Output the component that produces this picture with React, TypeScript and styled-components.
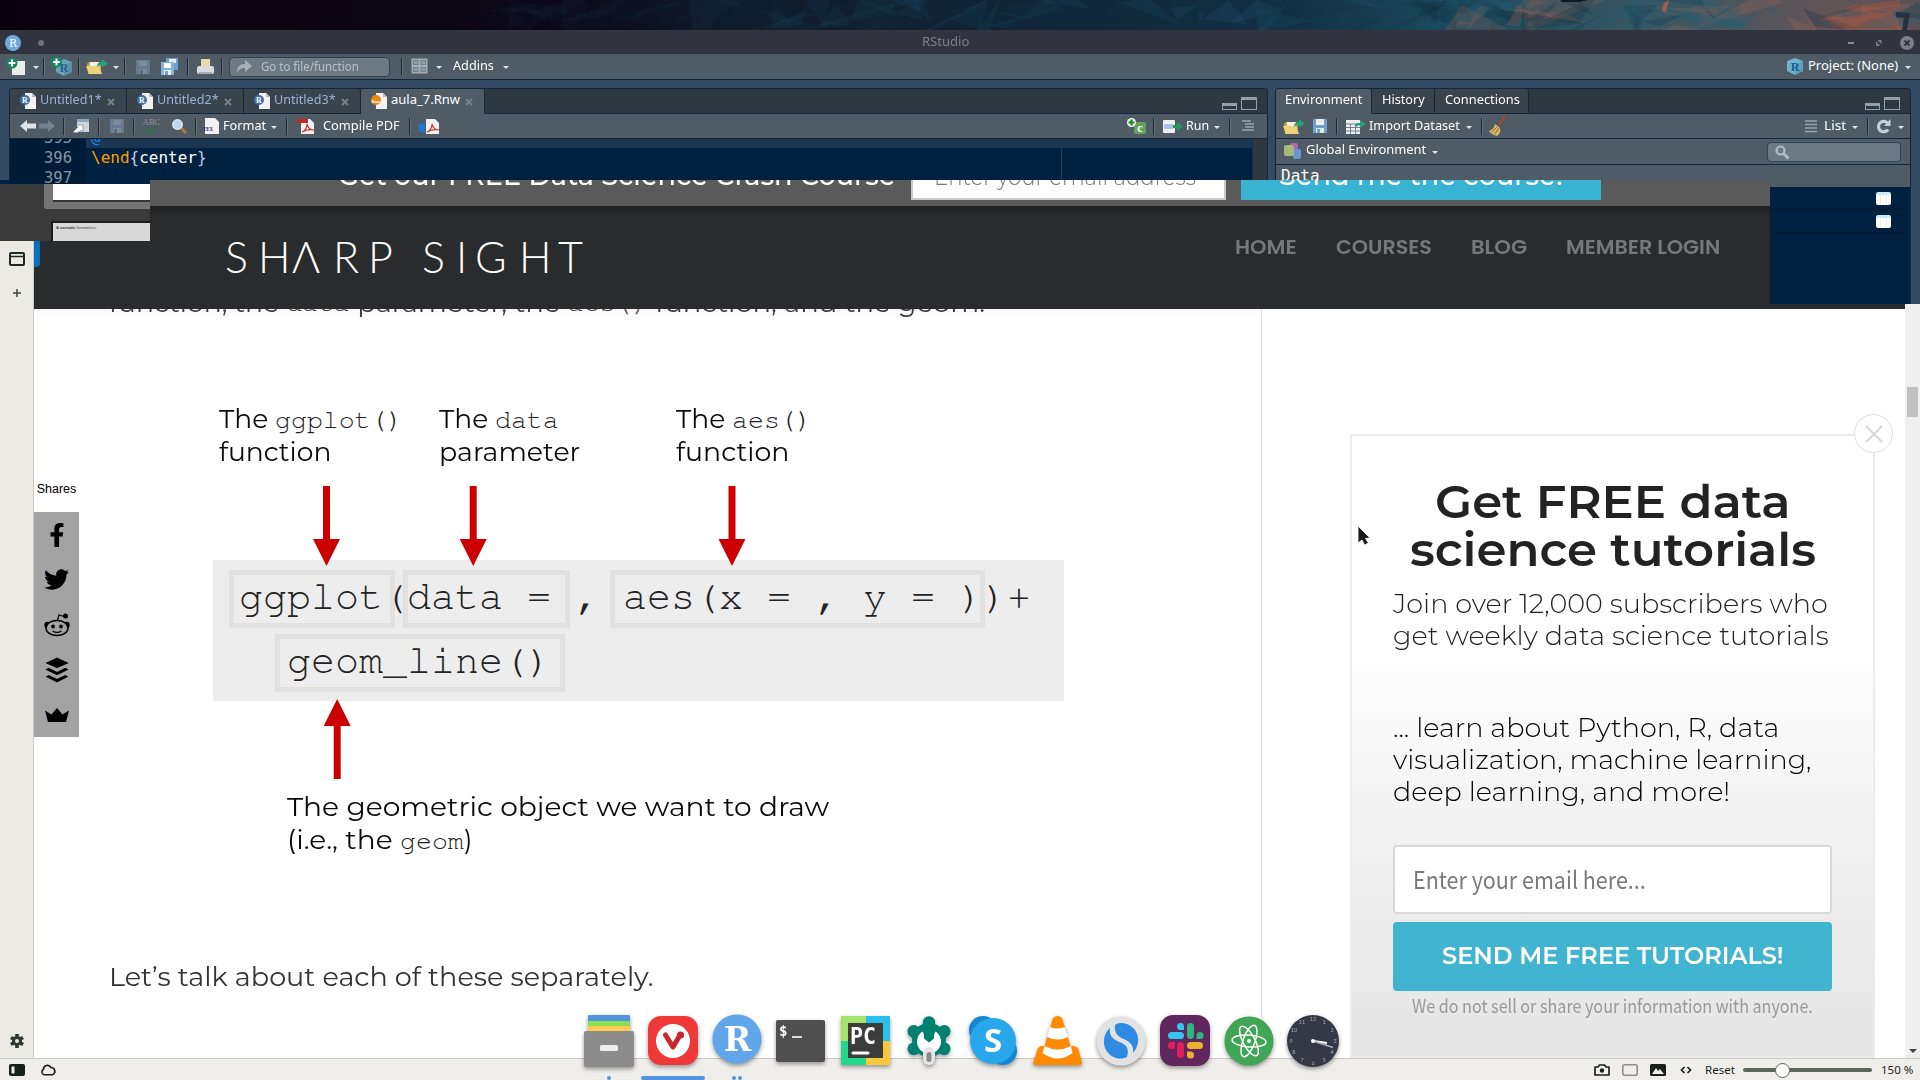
import React, { useLayoutEffect, useRef, useState } from "react";
import styled, { createGlobalStyle, css } from "styled-components";
import { FaFacebookF, FaTwitter, FaBuffer } from "react-icons/fa";

const sans = `"Montserrat", "Inter", "Open Sans", sans-serif`;
const ui = `"Noto Sans", "Open Sans", sans-serif`;
const mono = `"Nimbus Mono PS", "FreeMono", "Courier Prime", "Courier New", "Liberation Mono", monospace`;
const source = `"Source Sans Pro", "Noto Sans CJK SC", "Open Sans", sans-serif`;

const slate = "#4f5c66";
const navy = "#00213f";
const ink = "#13273b";
const frame = "#324b63";

const Global = createGlobalStyle`
  * { box-sizing: border-box; }
  body { margin: 0; background: #fff; }
  svg { display: block; overflow: visible; }
`;

/* ---------- text that is set to an exact measure ---------- */

const FitBox = styled.span`
  display: inline-block;
  flex: none;
  white-space: pre;
`;
const FitInner = styled.span`
  display: inline-block;
  transform-origin: 0 50%;
`;

function Fit({ w, children }: { w: number; children: React.ReactNode }) {
  const ref = useRef<HTMLSpanElement>(null);
  const [scale, setScale] = useState(1);
  useLayoutEffect(() => {
    if (ref.current) setScale(w / ref.current.offsetWidth);
  }, [w]);
  return (
    <FitBox style={{ width: w }}>
      <FitInner ref={ref} style={{ transform: `scaleX(${scale})` }}>
        {children}
      </FitInner>
    </FitBox>
  );
}

/* ---------- desktop ---------- */

const Screen = styled.div`
  position: relative;
  width: 1920px;
  height: 1080px;
  overflow: hidden;
  display: flex;
  flex-direction: column;
  background: #fff;
`;
const WallpaperStrip = styled.div`
  height: 30px;
  flex: none;
  overflow: hidden;
`;

function Wallpaper() {
  const shards: React.ReactNode[] = [];
  let seed = 41;
  const rnd = () => {
    seed = (seed * 16807) % 2147483647;
    return seed / 2147483647;
  };
  for (let i = 0; i < 190; i++) {
    const x = 480 + rnd() * 1440;
    const t = (x - 480) / 1440;
    const s = 20 + rnd() * 50;
    const warm = rnd() < (t - 0.6) * 1.7;
    const color = warm ? "#a86350" : rnd() > 0.5 ? "#1f6078" : "#12303f";
    const p = [0, 1, 2].map(() => `${x + (rnd() - 0.5) * s * 2},${15 + (rnd() - 0.5) * s}`).join(" ");
    shards.push(<polygon key={i} points={p} fill={color} opacity={0.05 + t * 0.25} />);
  }
  return (
    <svg width="1920" height="30">
      <defs>
        <linearGradient id="sky">
          <stop offset="0" stopColor="#0b0010" />
          <stop offset=".3" stopColor="#0c0716" />
          <stop offset=".37" stopColor="#0f1a29" />
          <stop offset=".55" stopColor="#10263a" />
          <stop offset=".67" stopColor="#133044" />
          <stop offset=".76" stopColor="#1c4a5e" />
          <stop offset=".86" stopColor="#3b5661" />
          <stop offset=".95" stopColor="#625558" />
          <stop offset="1" stopColor="#5c5055" />
        </linearGradient>
      </defs>
      <rect width="1920" height="30" fill="url(#sky)" />
      {shards}
      <path d="M1840 8l60-8v6l-40 6zM1824 18l68-6 8 18h-52z" fill="#b0543f" opacity=".4" />
      <path d="M1896 12l14 1-3 17h-5l2-12-8-1z" fill="#26323f" />
      <path d="M1560 0h28l-8 2h-18z" fill="#0c1a29" />
      <path d="M1664 3l5-3-3 12-4-1z" fill="#a0604f" />
    </svg>
  );
}

/* ---------- IDE window ---------- */

const TitleBar = styled.div`
  height: 24px;
  flex: none;
  background: #31343f;
  display: flex;
  align-items: center;
  padding: 2px 5px 0;
  color: #7c808b;
  font: 12.5px/20px ${ui};
`;
const TitleText = styled.div`
  margin-left: 878px;
  padding-bottom: 3px;
  flex: 1;
`;
const WindowDot = styled.div`
  width: 6px;
  height: 6px;
  margin-left: 17px;
  border-radius: 50%;
  background: #6d717b;
`;

const Bar = styled.div<{ $h?: number; $pad?: number }>`
  height: ${(p) => p.$h ?? 25}px;
  flex: none;
  display: flex;
  align-items: center;
  padding-left: ${(p) => p.$pad ?? 0}px;
  background: ${slate};
  color: #fff;
  font: 13px/20px ${ui};
  border-bottom: 1px solid ${ink};
`;
const Slot = styled.span<{ $gap?: number; $drop?: number }>`
  display: block;
  flex: none;
  margin-left: ${(p) => p.$gap ?? 0}px;
  padding-top: ${(p) => p.$drop ?? 0}px;
`;
const Label = styled.span<{ $gap?: number; $lift?: number }>`
  flex: none;
  margin-left: ${(p) => p.$gap ?? 0}px;
  padding-bottom: ${(p) => p.$lift ?? 2}px;
`;
const Divider = styled.span<{ $gap?: number }>`
  width: 2px;
  height: 17px;
  flex: none;
  margin-left: ${(p) => p.$gap ?? 0}px;
  background: linear-gradient(90deg, #1c2a36 50%, #65727c 50%);
`;
const Caret = styled.span<{ $gap?: number }>`
  flex: none;
  margin: 2px 0 0 ${(p) => p.$gap ?? 0}px;
  border: 3px solid transparent;
  border-top-color: #e1e5e8;
  border-bottom: 0;
`;
const Spacer = styled.span`
  flex: 1;
`;
const SearchField = styled.div<{ $w: number; $gap?: number }>`
  width: ${(p) => p.$w}px;
  height: 20px;
  flex: none;
  margin-left: ${(p) => p.$gap ?? 0}px;
  border: 1px solid #2f4153;
  border-radius: 4px;
  background: #6d7982;
  color: #b9c0c6;
  display: flex;
  align-items: center;
  padding-left: 7px;
`;

const Workspace = styled.div`
  position: relative;
  z-index: 3;
  height: 100px;
  flex: none;
  display: flex;
  gap: 7px;
  padding: 8px 9px 0;
  background: ${frame};
`;
const Pane = styled.div<{ $w: number }>`
  width: ${(p) => p.$w}px;
  flex: none;
  display: flex;
  flex-direction: column;
  border: 1px solid ${ink};
  border-bottom: 0;
  border-radius: 4px 4px 0 0;
  height: 92px;
`;
const TabStrip = styled.div`
  height: 25px;
  flex: none;
  display: flex;
  background: #2e3841;
  border-radius: 3px 3px 0 0;
  font: 13px/20px ${ui};
`;
const Tab = styled.div<{ $w: number; $active?: boolean; $plain?: boolean }>`
  width: ${(p) => p.$w}px;
  height: 25px;
  display: flex;
  align-items: center;
  padding-left: 10px;
  color: ${(p) => (p.$active || p.$plain ? "#fff" : "#9db1dc")};
  background: ${(p) => (p.$active ? slate : "#38434b")};
  border-right: 1px solid ${ink};
  border-bottom: 1px solid ${(p) => (p.$active ? slate : ink)};
  border-radius: 3px 3px 0 0;
`;
const TabRest = styled.div`
  flex: 1;
  display: flex;
  justify-content: flex-end;
  align-items: flex-end;
  gap: 4px;
  padding: 0 10px 3px 0;
  border-bottom: 1px solid ${ink};
`;
const MinIcon = styled.div`
  width: 15px;
  height: 7px;
  border: 1px solid #97a0a6;
  border-top-width: 3px;
`;
const MaxIcon = styled.div`
  width: 16px;
  height: 13px;
  border: 1px solid #97a0a6;
  border-top-width: 3px;
`;
const Editor = styled.div`
  height: 41px;
  flex: none;
  display: flex;
  background: ${navy};
  font: 16px/20px "DejaVu Sans Mono", monospace;
`;
const Gutter = styled.div`
  width: 76px;
  height: 45px;
  flex: none;
  overflow: hidden;
  padding-right: 14px;
  background: #001b36;
  color: #8795a3;
  font-size: 15.5px;
  text-align: right;
  div { height: 20px; }
  div:first-child { margin-top: -11px; }
`;
const Code = styled.div`
  flex: 1;
  overflow: hidden;
  color: #fff;
  background: linear-gradient(90deg, transparent 975px, #1f3f60 975px, #1f3f60 976px, transparent 976px);
`;
const CodeLine = styled.div<{ $current?: boolean }>`
  height: 20px;
  padding-left: 5px;
  white-space: pre;
  ${(p) => p.$current && css`
    margin-top: -11px;
    background: #1a3650;
    color: #0a84ff;
  `}
`;
const Macro = styled.span`color: #ff9d00;`;
const Brace = styled.span`color: #b9ccf5;`;
const EditorScroll = styled.div`
  width: 15px;
  background: #2e3841;
  border-left: 1px solid #13304c;
`;
const DataHead = styled.div`
  height: 15px;
  overflow: hidden;
  padding-left: 5px;
  background: ${slate};
  color: #fff;
  font: 16px/21px "DejaVu Sans Mono", monospace;
`;

/* the lower part of the environment pane, seen beside the browser */
const EnvRemainder = styled.div`
  position: absolute;
  z-index: 3;
  left: 1770px;
  top: 180px;
  width: 150px;
  height: 124px;
  background: ${frame};
  display: flex;
`;
const EnvTable = styled.div`
  width: 141px;
  height: 124px;
  background: ${navy};
  border-right: 1px solid ${ink};
`;
const EnvHead = styled.div`
  height: 7px;
  background: ${slate};
`;
const EnvRow = styled.div`
  height: 23px;
  border-bottom: 1px solid #06192e;
  display: flex;
  align-items: center;
  justify-content: flex-end;
  padding-right: 19px;
`;
const GridGlyph = styled.div`
  width: 15px;
  height: 13px;
  border-radius: 2px;
  border-top: 3px solid #c9ecfb;
  background:
    linear-gradient(90deg, transparent 4px, #eef0f3 4px, #eef0f3 5px, transparent 5px, transparent 10px, #eef0f3 10px, #eef0f3 11px, transparent 11px),
    #fff;
`;

/* thumbnails of a document viewer showing through at the left */
const Thumbs = styled.div`
  position: absolute;
  z-index: 2;
  left: 0;
  top: 180px;
  width: 150px;
  height: 61px;
  border-top: 4px solid ${navy};
  background: #3a3a3a;
  overflow: hidden;
  padding-left: 44px;
`;
const ThumbFrame = styled.div`
  height: 25px;
  padding-left: 9px;
  background: #747474;
  border-radius: 0 0 0 3px;
`;
const ThumbPage = styled.div`
  height: 18px;
  background: #fff;
  border-bottom: 2px solid #353535;
`;
const ThumbNext = styled.div`
  height: 21px;
  margin: 12px 0 0 7px;
  padding-left: 3px;
  border: 2px solid #1c1c1c;
  border-right: 0;
  border-bottom: 0;
  background: #d8d8d8;
  color: #444;
  font: 4px/9px "Liberation Sans", sans-serif;
`;

/* ---------- browser ---------- */

const Browser = styled.div`
  height: 878px;
  flex: none;
  display: flex;
`;
const Rail = styled.div`
  width: 34px;
  flex: none;
  margin-top: 61px;
  padding: 11px 0 10px;
  display: flex;
  flex-direction: column;
  align-items: center;
  background: #ebeae5;
  border-right: 1px solid #cccbc4;
  svg:nth-child(2) { margin-top: 23px; }
  svg:last-child { margin-top: auto; }
`;
const Page = styled.div`
  flex: 1;
  min-width: 0;
  display: flex;
  flex-direction: column;
`;
const Banner = styled.div`
  height: 26px;
  flex: none;
  display: flex;
  align-items: flex-start;
  overflow: hidden;
  padding-left: 304px;
  background: #5a5a5a;
  color: #fff;
  font: 500 27px/40px ${sans};
`;
const BannerText = styled.div`
  margin-top: -24px;
`;
const BannerField = styled.div`
  width: 315px;
  height: 60px;
  margin: -40px 0 0 16px;
  padding: 14px 0 0 21px;
  border: 2px solid #c9c9c9;
  background: #fff;
  color: #777;
  font-weight: 300;
  font-size: 25px;
`;
const BannerButton = styled.div`
  width: 360px;
  height: 60px;
  margin: -40px 0 0 15px;
  padding: 16px 0 0 38px;
  background: #3ab3d3;
`;
const SiteHeader = styled.div`
  position: relative;
  height: 103px;
  flex: none;
  display: flex;
  padding-left: 191px;
  background: linear-gradient(#202123, #2a2b2d 10px);
`;
const ActiveMark = styled.div`
  position: absolute;
  left: 0;
  top: 35px;
  width: 6px;
  height: 26px;
  background: #0071bc;
  border-radius: 0 0 4px 0;
`;
const Logo = styled.div`
  width: 363px;
  margin-top: 24px;
  display: flex;
  color: #fff;
  font: 300 43px/54px "Lato", sans-serif;
`;
const LogoLetter = styled.span<{ $w: number }>`
  width: ${(p) => p.$w}px;
`;
const Nav = styled.nav`
  display: flex;
  gap: 39px;
  margin: 25px 0 0 647px;
  color: #77787a;
  font: 600 20px/32px "Poppins", "Roboto", sans-serif;
`;

const Body = styled.div`
  flex: 1;
  min-height: 0;
  display: flex;
`;
const Article = styled.div`
  position: relative;
  width: 1228px;
  flex: none;
  border-right: 1px solid #dcdcdc;
  background: linear-gradient(#fbf8f9, #fff 12px);
`;
const Mono = styled.span`
  font-family: ${mono};
`;
const Clipped = styled.div`
  height: 10px;
  display: flex;
  overflow: hidden;
  padding-left: 75px;
  color: #3a3a3a;
  font: 400 26px/36px ${sans};
  > * { margin-top: -24px; }
  ${Mono} { font-size: 26.6px; }
`;
const ShareColumn = styled.div`
  width: 45px;
  margin-top: 162px;
  display: flex;
  flex-direction: column;
`;
const ShareLabel = styled.div`
  height: 16px;
  margin-bottom: 15px;
  text-align: center;
  font: 12.5px/16px "Liberation Sans", sans-serif;
`;
const ShareItem = styled.div`
  height: 45px;
  display: flex;
  align-items: center;
  justify-content: center;
  background: #a3a3a3;
  color: #000;
`;
const Closing = styled.div`
  margin: 224px 0 0 75px;
  color: #333;
  font: 400 26px/32px ${sans};
`;

/* annotated code figure */
const Figure = styled.div`
  position: absolute;
  left: 179px;
  top: 87px;
  width: 852px;
  height: 470px;
  color: #0a0a0a;
  font: 400 27px/33px ${sans};
`;
const CodePanel = styled.div`
  position: absolute;
  top: 164px;
  width: 851px;
  height: 141px;
  background: #ededed;
`;
const Frame = styled.div<{ $x: number; $y: number; $w: number }>`
  position: absolute;
  left: ${(p) => p.$x}px;
  top: ${(p) => p.$y}px;
  width: ${(p) => p.$w}px;
  height: 58px;
  border: 5px solid #e1e1e1;
`;
const Snippet = styled.div<{ $x: number; $y: number }>`
  position: absolute;
  left: ${(p) => p.$x}px;
  top: ${(p) => p.$y}px;
  white-space: pre;
  color: #222;
  font: 40px/52px ${mono};
`;
const Note = styled.div<{ $x: number; $y: number }>`
  position: absolute;
  left: ${(p) => p.$x}px;
  top: ${(p) => p.$y}px;
  ${Mono} { font-size: 26.6px; color: #222; }
`;
const NoteLine = styled.div`
  display: flex;
  align-items: baseline;
  height: 33px;
`;
const Arrows = styled.svg`
  position: absolute;
  left: 0;
  top: 0;
`;

/* sign-up card */
const Aside = styled.div`
  flex: 1;
  padding: 125px 0 0 88px;
`;
const Card = styled.div`
  position: relative;
  width: 525px;
  height: 624px;
  padding-top: 42px;
  display: flex;
  flex-direction: column;
  align-items: center;
  border: 2px solid #ececec;
  background: linear-gradient(#fff 200px, #fcfcfc 250px, #efefef 440px, #e5e5e5);
`;
const CloseButton = styled.div`
  position: absolute;
  right: -20px;
  top: -22px;
  width: 39px;
  height: 39px;
  border: 1.5px solid #dcdcdc;
  border-radius: 50%;
  background: #fff;
  display: grid;
  place-items: center;
`;
const CardTitle = styled.div`
  height: 96px;
  display: flex;
  flex-direction: column;
  align-items: center;
  color: #222;
  font: 600 46.5px/48px ${sans};
`;
const CardText = styled.div<{ $top: number; $color: string }>`
  width: 439px;
  margin-top: ${(p) => p.$top}px;
  display: flex;
  flex-direction: column;
  color: ${(p) => p.$color};
  font: 300 26.5px/32px ${sans};
`;
const EmailField = styled.div`
  width: 439px;
  height: 69px;
  margin-top: 37px;
  padding: 0 0 2px 18px;
  display: flex;
  align-items: center;
  border: 2px solid #d9d9d9;
  border-radius: 4px;
  background: #fff;
  color: #7a7a7a;
  font: 400 24px/30px ${source};
`;
const SubmitButton = styled.div`
  width: 439px;
  height: 69px;
  margin-top: 8px;
  padding-bottom: 2px;
  display: flex;
  align-items: center;
  justify-content: center;
  border-radius: 4px;
  background: #41b5cf;
  color: #fff;
  font: 600 23.5px/30px ${sans};
`;
const FinePrint = styled.div`
  color: #999;
  font: 400 18.5px/28px ${source};
`;
const Scrollbar = styled.div`
  position: relative;
  z-index: 2;
  width: 15px;
  margin-top: -5px;
  display: flex;
  flex-direction: column;
  align-items: center;
  justify-content: space-between;
  padding: 83px 0 5px;
  background: #efefef;
`;
const Thumb = styled.div`
  width: 11px;
  height: 30px;
  background: #c0c0c0;
`;
const DownArrow = styled.div`
  border: 4px solid transparent;
  border-top-color: #444;
  border-bottom: 0;
`;

const StatusBar = styled.div`
  height: 22px;
  flex: none;
  display: flex;
  align-items: center;
  padding: 1px 7px 0 9px;
  background: #efeeea;
  border-top: 1px solid #cccbc4;
  color: #1a241d;
  font: 11.5px/18px ${ui};
`;
const Slider = styled.div`
  width: 129px;
  height: 4px;
  margin: 0 9px 0 8px;
  border-radius: 2px;
  background: #5c6759;
  display: flex;
  align-items: center;
  padding-left: 32px;
`;
const Knob = styled.div`
  width: 15px;
  height: 15px;
  border: 1px solid #5c6759;
  border-radius: 50%;
  background: #fff;
`;

const Dock = styled.div`
  position: absolute;
  z-index: 4;
  left: 577px;
  top: 1013px;
  display: flex;
`;
const DockItem = styled.div`
  width: 64px;
  height: 67px;
  display: flex;
  flex-direction: column;
  align-items: center;
  justify-content: space-between;
  svg { filter: drop-shadow(0 2px 2px rgba(0, 0, 0, 0.4)); }
`;
const Running = styled.div`
  height: 4px;
  display: flex;
  gap: 2px;
`;
const RunDot = styled.span<{ $wide?: boolean }>`
  width: ${(p) => (p.$wide ? 64 : 4)}px;
  height: 4px;
  border-radius: 2px;
  background: #5294e2;
`;
const Pointer = styled.svg`
  position: absolute;
  z-index: 4;
  left: 1356px;
  top: 525px;
`;

/* ---------- small icons ---------- */

const Plus = ({ x = 5, y = 5 }: { x?: number; y?: number }) => (
  <g>
    <circle cx={x} cy={y} r="5.5" fill="#138a5e" />
    <path d={`M${x - 3.4} ${y}h6.8M${x} ${y - 3.4}v6.8`} stroke="#fff" strokeWidth="2" />
  </g>
);
const NewFile = () => (
  <svg width="20" height="18">
    <path d="M6 3h13v14H6z" fill="#eceeee" />
    <Plus x={6} y={5} />
  </svg>
);
const CubeShape = () => (
  <g>
    <path d="M9 0l8 3v10l-8 4-8-4V3z" fill="#6fb4cc" />
    <path d="M9 7v10l8-4V3z" fill="#4a8ea9" opacity=".55" />
    <text x="9" y="13" textAnchor="middle" fontFamily="Liberation Serif, serif" fontSize="12" fontWeight="700" fill="#1d5c94">R</text>
  </g>
);
const NewProject = () => (
  <svg width="21" height="20"><g transform="translate(4 2)" opacity=".8"><CubeShape /></g><Plus x={5.5} y={5} /></svg>
);
const Cube = () => <svg width="18" height="17"><CubeShape /></svg>;
const Folder = () => (
  <svg width="22" height="17">
    <path d="M1 6l2-2h5l1 2h6v10H2z" fill="#c9a54a" />
    <path d="M4 4h9v5H4z" fill="#f4f0dc" />
    <path d="M0 8h13l3 8H3z" fill="#ecd27c" />
    <path d="M11 9c0-4 2-5 5-5V1l6 4.500-6 4V7c-2 0-3 0-5 2z" fill="#28a07a" />
  </svg>
);
const Floppy = ({ c = "#6f9fcb" }: { c?: string }) => (
  <svg width="14" height="14">
    <path d="M0 0h14v14H0z" fill={c} />
    <path d="M3 0h8v6H3z" fill="#e9eef2" />
    <path d="M3 9h8v5H3z" fill="#dfe7ec" />
    <path d="M4 10h3v4H4z" fill={c} />
  </svg>
);
const DimFloppy = () => (
  <svg width="14" height="14">
    <path d="M0 0h14v14H0z" fill="#657b90" />
    <path d="M3 1h8v5H3z" fill="#7d8c98" />
    <path d="M3 9h8v5H3z" fill="#7d8c98" />
    <path d="M4 10h3v4H4z" fill="#566b80" />
  </svg>
);
const FloppyStack = () => (
  <svg width="17" height="18">
    <path d="M5 0h12v12H5z" fill="#6f9fcb" /><path d="M8 1h7v4H8z" fill="#e9eef2" />
    <path d="M0 4h13v13H0z" fill="#85b3da" /><path d="M3 5h7v5H3z" fill="#fff" /><path d="M3 12h7v5H3z" fill="#eaf0f4" /><path d="M4 13h3v4H4z" fill="#6f9fcb" />
  </svg>
);
const Printer = () => (
  <svg width="17" height="18">
    <path d="M4 1h9v9H4z" fill="#ead9ac" />
    <rect y="8" width="17" height="8" rx="2" fill="#d9dcdf" />
    <path d="M2 14h13v2H2z" fill="#a7adb2" />
  </svg>
);
const JumpArrow = () => (
  <svg width="15" height="14"><path d="M0 13c0-7 3-9 8-9V0l7 6-7 6V8C4 8 2 9 0 13z" fill="#a7afb5" /></svg>
);
const PanesGrid = () => (
  <svg width="17" height="17">
    <rect x=".5" y=".5" width="16" height="15" fill="#a4adb3" />
    <path d="M2 2h5.500v5H2zM9.500 2H15v5H9.500zM2 9h5.500v5H2zM9.500 9H15v5H9.500z" fill="#747f88" />
    <path d="M3 3h3.500v3H3zM10.500 3H14v3h-3.500zM3 10h3.500v3H3zM10.500 10H14v3h-3.500z" fill="#959ea5" />
  </svg>
);
const DocIcon = ({ c = "#3d6fa5", t = "R" }: { c?: string; t?: string }) => (
  <svg width="16" height="16">
    <path d="M5 0h7l4 4v12H5z" fill="#f2f2f2" /><path d="M12 0v4h4z" fill="#b9c0c4" />
    <circle cx="5" cy="7" r="5" fill={c} />
    <text x="5" y="9.500" textAnchor="middle" fontFamily="Liberation Serif, serif" fontWeight="700" fontSize={t.length > 1 ? 4.5 : 8} fill="#fff">{t}</text>
  </svg>
);
const TabClose = () => (
  <svg width="8" height="8"><path d="M1 1l6 6M7 1L1 7" stroke="#75808a" strokeWidth="2" /></svg>
);
const ArrowLR = ({ flip }: { flip?: boolean }) => (
  <svg width="16" height="12"><path transform={flip ? "translate(16 0) scale(-1 1)" : undefined} d="M0 6l7-6v3.500h9v5H7V12z" fill={flip ? "#75818a" : "#dfe2e4"} /></svg>
);
const PopOut = () => (
  <svg width="16" height="14">
    <path d="M4 0h12v13H4z" fill="#cfd6da" /><path d="M4 0h12v3H4z" fill="#8da5b5" />
    <path d="M0 13l5-5-2-2h7v7l-2-2-4 3z" fill="#fff" stroke="#66737d" strokeWidth=".6" />
  </svg>
);
const Spell = () => (
  <svg width="19" height="17">
    <text x="9.500" y="6.500" textAnchor="middle" fontFamily="Liberation Serif, serif" fontSize="8.500" fill="#8e979d">ABC</text>
    <path d="M5 12l3 3 6-7" fill="none" stroke="#1f7a38" strokeWidth="1.800" />
  </svg>
);
const Lens = () => (
  <svg width="15" height="15">
    <path d="M8 8l6 6" stroke="#b07a35" strokeWidth="3" /><circle cx="5.500" cy="5.500" r="4.700" fill="#bcd8ee" stroke="#dfe8ef" strokeWidth="1.500" />
  </svg>
);
const TexDoc = () => (
  <svg width="17" height="17">
    <path d="M2 0h10l4 4v12H2z" fill="#f2f2f2" />
    <text x="0" y="13" fontFamily="Liberation Serif, serif" fontSize="7" textLength="10" lengthAdjust="spacingAndGlyphs" fontWeight="700" fill="#2a2a80">TEX</text>
  </svg>
);
const PdfDoc = ({ publish }: { publish?: boolean }) => (
  <svg width={publish ? 22 : 18} height="17">
    <g transform={publish ? "translate(4 0)" : undefined}>
      <path d="M4 1h9l4 4v11H4z" fill="#f2f2f2" />
      {!publish && <path d="M0 1h11v4H0z" fill="#c22b25" />}
      <path d="M5 14c4-2 5-5 5-8 1 4 3 6 7 6-4-1-8 0-12 2z" fill="none" stroke="#cc3a33" strokeWidth="1.100" />
    </g>
    {publish && <path d="M9 15C1 15 0 12 1 8L0 7l6-2 2 6-2-1c0 2 1 3 3 5z" fill="#1a78d0" />}
  </svg>
);
const InsertChunk = () => (
  <svg width="19" height="17">
    <rect x="7" y="4" width="12" height="12" rx="2" fill="#64a35f" />
    <text x="13" y="13.500" textAnchor="middle" fontFamily="Liberation Serif, serif" fontSize="12" fontWeight="700" fill="#fff">c</text>
    <circle cx="4.500" cy="4.500" r="4.500" fill="#f2f2f2" /><path d="M1.500 4.500h6M4.500 1.500v6" stroke="#1b8a1b" strokeWidth="2.200" />
  </svg>
);
const RunIcon = () => (
  <svg width="20" height="13">
    <rect width="12" height="13" rx="1" fill="#eef0f2" /><path d="M1 4h9v5H1z" fill="#a9c4e6" />
    <path d="M10 5h4V2l6 4.500-6 4.500V8h-4z" fill="#1c9c5a" />
  </svg>
);
const Lines = ({ step }: { step?: boolean }) => (
  <svg width="13" height="12">
    <path d={step ? "M0 1h9M3 4h9M3 7h9M0 10h12" : "M0 1h12M0 4.500h12M0 8h12M0 11.500h12"} stroke="#9aa3a9" strokeWidth="1.300" />
  </svg>
);
const ImportIcon = () => (
  <svg width="20" height="15">
    <path d="M0 1h14v14H0z" fill="#eceff1" /><path d="M0 5h14M0 8.500h14M0 12h14M4.500 5v10M9.500 5v10" stroke="#70808c" />
    <path d="M9 8c0-4 2-4 5-4V1l6 4-6 4V6.500c-2 0-3 0-5 1.500z" fill="#28a07a" />
  </svg>
);
const Broom = () => (
  <svg width="18" height="20">
    <path d="M16 0l-6 9" stroke="#b5452f" strokeWidth="2" />
    <path d="M6 8l5 4c1 3 0 6-3 8-3-1-6-2-8-5 3-1 5-3 6-7z" fill="#d9b36a" /><path d="M3 16l5-5M6 18l4-6" stroke="#8d6a30" />
  </svg>
);
const Refresh = () => (
  <svg width="15" height="15"><path d="M12 10.500A5.200 5.200 0 1 1 11.500 4" fill="none" stroke="#c9d0d5" strokeWidth="3.200" /><path d="M14.500 0v7H8z" fill="#c9d0d5" /></svg>
);
const EnvIcon = () => (
  <svg width="17" height="17">
    <rect x="6" width="8" height="11" rx="2" fill="#a868b4" /><rect x="9" y="6" width="8" height="10" rx="2" fill="#6a95d0" /><rect y="2" width="10" height="11" rx="2" fill="#a7b77a" />
  </svg>
);
const SmallLens = () => (
  <svg width="15" height="14"><circle cx="5.500" cy="5.500" r="4" fill="none" stroke="#b4bcc2" strokeWidth="2.200" /><path d="M8.500 8.500l5 5" stroke="#b4bcc2" strokeWidth="3" /></svg>
);

/* ---------- dock icons ---------- */

const Files = () => (
  <svg width="50" height="54" viewBox="0 0 50 54">
    <rect x="4" y="2" width="42" height="14" rx="1" fill="#5294e2" /><rect x="4" y="8" width="42" height="9" fill="#8ade52" /><rect x="4" y="13" width="42" height="9" fill="#ffcb52" />
    <rect y="18" width="50" height="36" rx="2" fill="#8c8c8c" /><rect x="16" y="32" width="18" height="6" rx="1.500" fill="#eee" />
  </svg>
);
const Vivaldi = () => (
  <svg width="50" height="52" viewBox="0 0 50 52">
    <rect y="3" width="50" height="49" rx="13" fill="#ef3939" /><circle cx="25" cy="28" r="17" fill="#fff" />
    <path d="M17.500 22l7.500 12 6.500-11" fill="none" stroke="#c9252b" strokeWidth="5" strokeLinecap="round" strokeLinejoin="round" /><circle cx="32.500" cy="22" r="3.600" fill="#c9252b" />
  </svg>
);
const RApp = () => (
  <svg width="50" height="52" viewBox="0 0 50 52">
    <circle cx="25" cy="26" r="24.500" fill="#61a6ea" />
    <text x="25.500" y="38" textAnchor="middle" fontFamily="DejaVu Serif, serif" fontWeight="700" fontSize="33" fill="#fff">R</text>
  </svg>
);
const Terminal = () => (
  <svg width="50" height="50" viewBox="0 0 50 50">
    <rect y="7" width="49" height="42" rx="2" fill="#4f4f4f" />
    <text x="3" y="23" fontFamily="DejaVu Sans Mono, monospace" fontSize="14" fontWeight="700" fill="#fff">$</text><path d="M16 24h10" stroke="#fff" strokeWidth="1.600" />
  </svg>
);
const PyCharm = () => (
  <svg width="49" height="52" viewBox="0 0 49 52">
    <path d="M0 3h25v25H0z" fill="#a4e46a" /><path d="M25 3h24v25H25z" fill="#2ac0ee" /><path d="M0 28h25v24H0z" fill="#22d88a" /><path d="M25 28h24v24H25z" fill="#f8c83c" />
    <path d="M7 10h35v35H7z" fill="#3c3c3c" />
    <text x="9" y="31" fontFamily="DejaVu Sans Mono, monospace" fontWeight="700" fontSize="23" textLength="26" lengthAdjust="spacingAndGlyphs" fill="#fff">PC</text>
    <path d="M12 40h15" stroke="#fff" strokeWidth="3" strokeLinecap="round" />
  </svg>
);
const Tweaks = () => (
  <svg width="46" height="52" viewBox="0 0 46 52">
    {[0, 60, 120, 180, 240, 300].map((a) => (
      <circle key={a} cx={23 + 17.5 * Math.sin((a * Math.PI) / 180)} cy={27 - 17.5 * Math.cos((a * Math.PI) / 180)} r="6.3" fill="#00806e" />
    ))}
    <circle cx="23" cy="27" r="17" fill="#00806e" />
    <path d="M16.500 18.500A12 12 0 1 0 29.500 18.500a7 7 0 0 0-1.500 4v3l-5 4-5-4v-3a7 7 0 0 0-1.500-4z" fill="#fff" />
    <rect x="17" y="34" width="12" height="18" rx="6" fill="#e6e6e6" /><rect x="20.500" y="39" width="5" height="10" rx="2.500" fill="#8b8b8b" />
  </svg>
);
const Skype = () => (
  <svg width="50" height="52" viewBox="0 0 50 52">
    <circle cx="15" cy="17" r="14" fill="#1586d6" /><circle cx="35" cy="38" r="14" fill="#1586d6" /><circle cx="25" cy="28" r="23" fill="#28a8ea" />
    <text x="25" y="39" textAnchor="middle" fontFamily="Open Sans, sans-serif" fontWeight="700" fontSize="33" fill="#fff">S</text>
  </svg>
);
const Vlc = () => (
  <svg width="49" height="52" viewBox="0 0 49 52">
    <path d="M8 33h33l4 2 4 15q0 2-2 2H2q-2 0-2-2l5-15z" fill="#ff8a00" />
    <path d="M20 5q4.500-4 9 0l10 33q-14 13-29 0z" fill="#ff8a00" />
    <path d="M17 14q7 3 14.500 0l3.500 10q-10 5-21 0zM11.500 33q13 7 26.500 0l1.500 7q-14.500 11-30 0z" fill="#fff" />
  </svg>
);
const Simplenote = () => (
  <svg width="50" height="52" viewBox="0 0 50 52">
    <circle cx="25" cy="28" r="24.500" fill="#e2e2e2" />
    <path d="M19 12C23 8 34 10 39 17c5 8 4 16-2 23 1-8-3-11-9-14-6-2-10-6-9-14z" fill="#2f8ae4" />
    <path d="M14 15c-1 8 3 11 9 14 6 2 11 5 8 15-8 4-17 0-21-7-4-8-2-17 4-22z" fill="#2f8ae4" />
  </svg>
);
const Slack = () => (
  <svg width="50" height="53" viewBox="0 0 50 53">
    <rect y="2" width="50" height="51" rx="13" fill="#60275f" />
    <g fill="#36c5f0"><rect x="8" y="19" width="16" height="7" rx="3.500" /><path d="M24 17h-3.500a3.500 3.500 0 1 1 3.500-3.500z" /></g>
    <g fill="#2eb67d"><rect x="27" y="10" width="7" height="16" rx="3.500" /><path d="M36.500 26v-3.500a3.500 3.500 0 1 1 3.500 3.500z" /></g>
    <g fill="#ecb22e"><rect x="27" y="29" width="16" height="7" rx="3.500" /><path d="M27 38.500h3.500a3.500 3.500 0 1 1-3.500 3.500z" /></g>
    <g fill="#e01e5a"><rect x="17" y="29" width="7" height="16" rx="3.500" /><path d="M15 29v3.500a3.500 3.500 0 1 1-3.500-3.500z" /></g>
  </svg>
);
const Atom = () => (
  <svg width="50" height="52" viewBox="0 0 50 52">
    <circle cx="25" cy="28" r="24.500" fill="#40a555" />
    <g fill="none" stroke="#fff" strokeWidth="1.500">
      <ellipse cx="25" cy="28" rx="17" ry="6" transform="rotate(4 25 28)" />
      <ellipse cx="25" cy="28" rx="16.500" ry="6" transform="rotate(62 25 28)" />
      <ellipse cx="25" cy="28" rx="16.500" ry="6" transform="rotate(-70 25 28)" />
    </g>
    <circle cx="25" cy="28" r="2" fill="#fff" />
  </svg>
);
const Clock = () => (
  <svg width="52" height="54" viewBox="0 0 52 54">
    <circle cx="26" cy="28" r="26" fill="#353945" />
    {Array.from({ length: 12 }, (_, i) => {
      const a = ((i + 1) * Math.PI) / 6;
      return (
        <text key={i} x={26 + 22 * Math.sin(a)} y={30 - 22 * Math.cos(a)} textAnchor="middle" fontFamily="Lato, sans-serif" fontSize="5.500" fill="#a5a9b3">{i + 1}</text>
      );
    })}
    <path d="M26 28l14 2" stroke="#fff" strokeWidth="2" /><path d="M26 28l20 6.500" stroke="#a9adb8" strokeWidth="1.400" /><circle cx="26" cy="28" r="2" fill="#fff" />
  </svg>
);

const dock: { Icon: () => React.ReactElement; run?: number }[] = [
  { Icon: Files, run: 1 },
  { Icon: Vivaldi, run: -1 },
  { Icon: RApp, run: 2 },
  { Icon: Terminal },
  { Icon: PyCharm },
  { Icon: Tweaks },
  { Icon: Skype },
  { Icon: Vlc },
  { Icon: Simplenote },
  { Icon: Slack },
  { Icon: Atom },
  { Icon: Clock },
];

/* ---------- sections ---------- */

function Ide() {
  return (
    <>
      <TitleBar>
        <svg width="16" height="16"><circle cx="8" cy="8" r="8" fill="#6fa8dc" /><text x="8" y="12" textAnchor="middle" fontFamily="DejaVu Serif, serif" fontSize="10.500" fill="#fff">R</text></svg>
        <WindowDot />
        <TitleText><Fit w={47}>RStudio</Fit></TitleText>
        <svg width="64" height="16">
          <path d="M-3 8h6" stroke="#8b8e98" strokeWidth="2" />
          <path d="M25 6v5h4zM26.500 5h4v4z" fill="#7b7f8a" />
          <circle cx="56" cy="8" r="7" fill="#7b7f8a" /><path d="M53.500 5.500l5 5M58.500 5.500l-5 5" stroke="#31343f" strokeWidth="1.800" />
        </svg>
      </TitleBar>
      <Bar $h={26} $pad={6}>
        <Slot><NewFile /></Slot><Caret $gap={7} /><Divider $gap={4} />
        <Slot $gap={6}><NewProject /></Slot><Divider $gap={6} />
        <Slot $gap={6}><Folder /></Slot><Caret $gap={5} /><Divider $gap={5} />
        <Slot $gap={10}><DimFloppy /></Slot><Slot $gap={11}><FloppyStack /></Slot><Divider $gap={9} />
        <Slot $gap={8}><Printer /></Slot><Divider $gap={7} />
        <SearchField $w={161} $gap={6}>
          <JumpArrow /><Label $gap={9} $lift={1}><Fit w={98}>Go to file/function</Fit></Label>
        </SearchField>
        <Divider $gap={11} />
        <Slot $gap={8}><PanesGrid /></Slot><Caret $gap={8} />
        <Label $gap={11} $lift={3}><Fit w={41}>Addins</Fit></Label><Caret $gap={9} />
        <Spacer />
        <Cube /><Label $gap={4} $lift={3}><Fit w={90}>Project: (None)</Fit></Label><Caret $gap={7} />
        <Slot $gap={9} />
      </Bar>
      <Workspace>
        <Pane $w={1259}>
          <TabStrip>
            {["Untitled1*", "Untitled2*", "Untitled3*"].map((t) => (
              <Tab key={t} $w={117}>
                <DocIcon /><Label $gap={4} $lift={5}><Fit w={62}>{t}</Fit></Label><Slot $gap={5} $drop={1}><TabClose /></Slot>
              </Tab>
            ))}
            <Tab $w={124} $active>
              <DocIcon c="#e88a10" t="Rnw" /><Label $gap={4} $lift={5}><Fit w={69}>aula_7.Rnw</Fit></Label><Slot $gap={5} $drop={1}><TabClose /></Slot>
            </Tab>
            <TabRest><MinIcon /><MaxIcon /></TabRest>
          </TabStrip>
          <Bar $pad={10}>
            <ArrowLR /><Slot $gap={3}><ArrowLR flip /></Slot><Divider $gap={8} />
            <Slot $gap={8}><PopOut /></Slot><Divider $gap={9} />
            <Slot $gap={10}><DimFloppy /></Slot><Divider $gap={9} />
            <Slot $gap={7}><Spell /></Slot><Slot $gap={11}><Lens /></Slot><Divider $gap={8} />
            <Slot $gap={6}><TexDoc /></Slot><Label $gap={3} $lift={2}><Fit w={43}>Format</Fit></Label><Caret $gap={5} /><Divider $gap={9} />
            <Slot $gap={9}><PdfDoc /></Slot><Label $gap={8} $lift={2}><Fit w={77}>Compile PDF</Fit></Label><Divider $gap={9} />
            <Slot $gap={7}><PdfDoc publish /></Slot>
            <Spacer />
            <InsertChunk /><Divider $gap={7} />
            <Slot $gap={8}><RunIcon /></Slot><Label $gap={3} $lift={2}><Fit w={23}>Run</Fit></Label><Caret $gap={5} /><Divider $gap={9} />
            <Slot $gap={11}><Lines step /></Slot><Slot $gap={12} />
          </Bar>
          <Editor>
            <Gutter><div>395</div><div>396</div><div>397</div></Gutter>
            <Code>
              <CodeLine $current>@</CodeLine>
              <CodeLine><Macro>\end</Macro><Brace>{"{"}</Brace>center<Brace>{"}"}</Brace></CodeLine>
            </Code>
            <EditorScroll />
          </Editor>
        </Pane>
        <Pane $w={636}>
          <TabStrip>
            <Tab $w={96} $active><Label $lift={5} $gap={-1}><Fit w={77}>Environment</Fit></Label></Tab>
            <Tab $w={63} $plain><Label $lift={5}><Fit w={43}>History</Fit></Label></Tab>
            <Tab $w={94} $plain><Label $lift={5}><Fit w={75}>Connections</Fit></Label></Tab>
            <TabRest><MinIcon /><MaxIcon /></TabRest>
          </TabStrip>
          <Bar $pad={7}>
            <Folder /><Slot $gap={8}><Floppy /></Slot><Divider $gap={9} />
            <Slot $gap={8}><ImportIcon /></Slot><Label $gap={3} $lift={2}><Fit w={91}>Import Dataset</Fit></Label><Caret $gap={6} /><Divider $gap={9} />
            <Slot $gap={6}><Broom /></Slot>
            <Spacer />
            <Lines /><Label $gap={6} $lift={2}><Fit w={22}>List</Fit></Label><Caret $gap={6} /><Divider $gap={9} />
            <Slot $gap={7}><Refresh /></Slot><Caret $gap={7} /><Slot $gap={6} />
          </Bar>
          <Bar $h={26} $pad={8}>
            <EnvIcon /><Label $gap={5} $lift={5}><Fit w={120}>Global Environment</Fit></Label><Caret $gap={6} />
            <Spacer />
            <SearchField $w={134}><SmallLens /></SearchField><Slot $gap={9} />
          </Bar>
          <DataHead>Data</DataHead>
        </Pane>
      </Workspace>
      <EnvRemainder>
        <EnvTable>
          <EnvHead />
          <EnvRow><GridGlyph /></EnvRow>
          <EnvRow><GridGlyph /></EnvRow>
        </EnvTable>
      </EnvRemainder>
      <Thumbs>
        <ThumbFrame><ThumbPage /></ThumbFrame>
        <ThumbNext><b>A camada</b> Geometrics</ThumbNext>
      </Thumbs>
    </>
  );
}

const logo: [string, number][] = [["S", 33], ["H", 34], ["Λ", 41], ["R", 35], ["P", 54], ["S", 34], ["I", 19], ["G", 44], ["H", 39], ["T", 26]];

function SiteTop() {
  return (
    <>
      <Banner>
        <BannerText><Fit w={557}>Get our FREE Data Science Crash Course</Fit></BannerText>
        <BannerField><Fit w={262}>Enter your email address</Fit></BannerField>
        <BannerButton><Fit w={284}>Send me the course!</Fit></BannerButton>
      </Banner>
      <SiteHeader>
        <ActiveMark />
        <Logo>{logo.map(([c, w], i) => <LogoLetter key={i} $w={w}>{c}</LogoLetter>)}</Logo>
        <Nav>
          <Fit w={62}>HOME</Fit><Fit w={96}>COURSES</Fit><Fit w={56}>BLOG</Fit><Fit w={154}>MEMBER LOGIN</Fit>
        </Nav>
      </SiteHeader>
    </>
  );
}

const Down = ({ x }: { x: number }) => <path d={`M${x - 3.5} 90h7v53h10l-13.500 27-13.500-27h10z`} fill="#cc0000" />;

function Explainer() {
  return (
    <Figure>
      <CodePanel />
      <Frame $x={16} $y={174} $w={166} />
      <Frame $x={190} $y={174} $w={167} />
      <Frame $x={397} $y={174} $w={375} />
      <Frame $x={62} $y={238} $w={290} />
      <Snippet $x={26} $y={175}>{"ggplot(data = , aes(x = , y = ))+"}</Snippet>
      <Snippet $x={74} $y={239}>geom_line()</Snippet>
      <Note $x={6} $y={6}>
        <NoteLine><Fit w={56}>The </Fit><Mono>ggplot()</Mono></NoteLine>
        <NoteLine><Fit w={112}>function</Fit></NoteLine>
      </Note>
      <Note $x={226} $y={6}>
        <NoteLine><Fit w={56}>The </Fit><Mono>data</Mono></NoteLine>
        <NoteLine><Fit w={141}>parameter</Fit></NoteLine>
      </Note>
      <Note $x={463} $y={6}>
        <NoteLine><Fit w={56}>The </Fit><Mono>aes()</Mono></NoteLine>
        <NoteLine><Fit w={113}>function</Fit></NoteLine>
      </Note>
      <Note $x={74} $y={394}>
        <NoteLine><Fit w={542}>The geometric object we want to draw</Fit></NoteLine>
        <NoteLine><Fit w={113}>(i.e., the </Fit><Mono>geom</Mono><Fit w={15}>) </Fit></NoteLine>
      </Note>
      <Arrows width="852" height="470">
        <Down x={113.5} /><Down x={260.2} /><Down x={519} />
        <path d="M121 383v-53h-10l13.500-27 13.500 27h-10v53z" transform="translate(-.3 0)" fill="#cc0000" />
      </Arrows>
    </Figure>
  );
}

function Site() {
  return (
    <Browser>
      <Rail>
        <svg width="16" height="14"><rect x="1" y="1" width="14" height="12" rx="1" fill="none" stroke="#1d2a20" strokeWidth="2" /><path d="M1 4.500h14" stroke="#1d2a20" strokeWidth="1.500" /></svg>
        <svg width="8" height="8"><path d="M4 0v8M0 4h8" stroke="#3b463d" strokeWidth="1.500" /></svg>
        <svg width="14" height="14" viewBox="0 0 14 14">
          {[0, 60, 120].map((a) => <rect key={a} x="5.200" y="0" width="3.600" height="14" fill="#2c382f" transform={`rotate(${a} 7 7)`} />)}
          <circle cx="7" cy="7" r="5" fill="#2c382f" /><circle cx="7" cy="7" r="2" fill="#ebeae5" />
        </svg>
      </Rail>
      <Page>
        <SiteTop />
        <Body>
          <Article>
            <Clipped>
              <Fit w={177}>function, the </Fit><Mono>data</Mono><Fit w={218}> parameter, the </Fit><Mono>aes()</Mono><Fit w={337}> function, and the geom:</Fit>
            </Clipped>
            <Explainer />
            <ShareColumn>
              <ShareLabel>Shares</ShareLabel>
              <ShareItem><FaFacebookF size={24} /></ShareItem>
              <ShareItem><FaTwitter size={25} /></ShareItem>
              <ShareItem>
                <svg width="26" height="24" viewBox="0 0 26 24">
                  <circle cx="3.500" cy="12" r="3.200" /><circle cx="22.500" cy="12" r="3.200" />
                  <ellipse cx="13" cy="15" rx="11" ry="7.600" fill="#a3a3a3" stroke="#000" strokeWidth="1.500" />
                  <circle cx="9" cy="13.500" r="1.900" /><circle cx="17" cy="13.500" r="1.900" />
                  <path d="M8.500 18q4.500 2.800 9 0M13.500 7l1.500-5 5 1.500" fill="none" stroke="#000" strokeWidth="1.300" /><circle cx="21.500" cy="3" r="2.500" />
                </svg>
              </ShareItem>
              <ShareItem><FaBuffer size={28} /></ShareItem>
              <ShareItem>
                <svg width="24" height="14"><path d="M0 2.500l6.500 4L12 0l5.500 6.500 6.500-4L21 14H3z" /></svg>
              </ShareItem>
            </ShareColumn>
            <Closing><Fit w={545}>Let’s talk about each of these separately.</Fit></Closing>
          </Article>
          <Aside>
            <Card>
              <CloseButton><svg width="18" height="18"><path d="M1 1l16 16M17 1L1 17" stroke="#d6d6d6" strokeWidth="1.800" /></svg></CloseButton>
              <CardTitle><Fit w={355}>Get FREE data</Fit><Fit w={406}>science tutorials</Fit></CardTitle>
              <CardText $top={14} $color="#222"><Fit w={435}>Join over 12,000 subscribers who</Fit><Fit w={436}>get weekly data science tutorials</Fit></CardText>
              <CardText $top={60} $color="#000"><Fit w={386}>... learn about Python, R, data</Fit><Fit w={419}>visualization, machine learning,</Fit><Fit w={337}>deep learning, and more!</Fit></CardText>
              <EmailField><Fit w={233}>Enter your email here...</Fit></EmailField>
              <SubmitButton><Fit w={342}>SEND ME FREE TUTORIALS!</Fit></SubmitButton>
              <FinePrint><Fit w={401}>We do not sell or share your information with anyone.</Fit></FinePrint>
            </Card>
          </Aside>
          <Scrollbar><Thumb /><DownArrow /></Scrollbar>
        </Body>
      </Page>
    </Browser>
  );
}

function Status() {
  return (
    <StatusBar>
      <svg width="16" height="12"><rect width="16" height="12" rx="2" fill="#17211a" /><path d="M2.500 2.500h3v7h-3z" fill="#efeeea" /></svg>
      <Slot $gap={15}><svg width="16" height="12"><path d="M4 10.800a3 3 0 0 1-.5-5.500A4 4 0 0 1 11 3.500a3.800 3.800 0 0 1 1.500 7.300z" fill="none" stroke="#17211a" strokeWidth="1.600" /></svg></Slot>
      <Spacer />
      <svg width="16" height="12"><path d="M1 3h3l1.500-2h5L12 3h3v8H1z" fill="none" stroke="#17211a" strokeWidth="1.700" strokeLinejoin="round" /><circle cx="8" cy="6.500" r="2.200" fill="#17211a" /></svg>
      <Slot $gap={12}><svg width="16" height="12"><rect x=".8" y=".8" width="14.400" height="10.400" rx="2" fill="none" stroke="#8b9086" strokeWidth="1.600" /></svg></Slot>
      <Slot $gap={12}><svg width="16" height="12"><rect width="16" height="12" rx="1.500" fill="#17211a" /><path d="M2 10l4-6 2 3 2-2 4 5z" fill="#efeeea" /></svg></Slot>
      <Slot $gap={14}><svg width="12" height="8"><path d="M4.500 1L1.500 4l3 3M7.500 1l3 3-3 3" fill="none" stroke="#17211a" strokeWidth="1.700" /></svg></Slot>
      <Label $gap={13} $lift={0}><Fit w={30}>Reset</Fit></Label>
      <Slider><Knob /></Slider>
      <Fit w={32}>150 %</Fit>
    </StatusBar>
  );
}

export default function App() {
  return (
    <Screen>
      <Global />
      <WallpaperStrip><Wallpaper /></WallpaperStrip>
      <Ide />
      <Site />
      <Status />
      <Dock>
        {dock.map(({ Icon, run }, i) => (
          <DockItem key={i}>
            <Icon />
            <Running>
              {run === -1 ? <RunDot $wide /> : Array.from({ length: run ?? 0 }, (_, k) => <RunDot key={k} />)}
            </Running>
          </DockItem>
        ))}
      </Dock>
      <Pointer width="18" height="24">
        <path d="M2 1v17l4-3 2.500 5 4-2-3-4.500 4.500-.5z" fill="#1c1c1c" stroke="#fff" strokeOpacity=".8" strokeWidth="1" />
      </Pointer>
    </Screen>
  );
}
